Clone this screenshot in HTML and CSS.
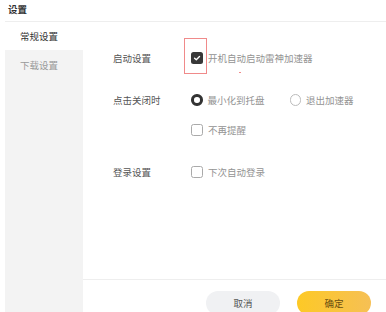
FILE: index.html
```html
<!DOCTYPE html>
<html>
<head>
<meta charset="utf-8">
<link rel="stylesheet" href="styles.css">
</head>
<body>
<div class="header"><span class="title">设置</span></div>
<div class="layout">
  <nav class="sidebar">
    <div class="nav-item active">常规设置</div>
    <div class="nav-item">下载设置</div>
  </nav>
  <div class="main">
    <div class="content">
      <div class="group g1">
        <div class="label">启动设置</div>
        <div class="controls">
          <div class="line">
            <span class="cb-wrap">
              <span class="checkbox checked">
                <svg viewBox="0 0 12 12" width="12" height="12"><path d="M3.6 6.2 L5.3 7.8 L8.5 4.6" fill="none" stroke="#fff" stroke-width="1.4" stroke-linecap="round" stroke-linejoin="round"/></svg>
              </span>
              <span class="highlight"></span>
              <span class="dot"></span>
            </span>
            <span class="opt">开机自动启动雷神加速器</span>
          </div>
        </div>
      </div>
      <div class="group g2">
        <div class="label">点击关闭时</div>
        <div class="controls">
          <div class="line">
            <span class="radio selected"></span>
            <span class="opt">最小化到托盘</span>
            <span class="radio second"></span>
            <span class="opt">退出加速器</span>
          </div>
          <div class="line sub">
            <span class="checkbox"></span>
            <span class="opt">不再提醒</span>
          </div>
        </div>
      </div>
      <div class="group g3">
        <div class="label">登录设置</div>
        <div class="controls">
          <div class="line">
            <span class="checkbox"></span>
            <span class="opt">下次自动登录</span>
          </div>
        </div>
      </div>
    </div>
    <div class="footer">
      <button class="btn cancel">取消</button>
      <button class="btn ok">确定</button>
    </div>
  </div>
</div>
</body>
</html>
```

FILE: styles.css
```css
* { box-sizing: border-box; }
html, body { margin: 0; padding: 0; }
body {
  width: 386px;
  height: 312px;
  overflow: hidden;
  background: #fff;
  font-family: "Noto Sans CJK SC", "Noto Sans", sans-serif;
  font-size: 9.5px;
  color: #555;
}
.header {
  margin-left: 5px;
  height: 22px;
  padding-left: 3px;
  border-bottom: 1px solid #eeeeee;
  display: flex;
  align-items: center;
  padding-bottom: 4px;
}
.title {
  font-weight: bold;
  color: #333;
  font-size: 9.5px;
}
.layout {
  display: flex;
  margin-left: 5px;
  height: 290px;
}
.sidebar {
  width: 78px;
  background: #f3f3f3;
  display: flex;
  flex-direction: column;
}
.nav-item {
  height: 29px;
  padding-left: 15px;
  display: flex;
  align-items: center;
  color: #999;
}
.nav-item.active {
  background: #fff;
  color: #333;
  height: 28px;
}
.main {
  flex: 1;
  display: flex;
  flex-direction: column;
}
.content {
  flex: 1;
  padding-left: 30px;
  padding-top: 26px;
}
.group {
  display: flex;
}
.g2 { margin-top: 22px; }
.g3 { margin-top: 22px; }
.label {
  width: 78px;
  height: 20px;
  display: flex;
  align-items: center;
  color: #555;
}
.controls {
  display: flex;
  flex-direction: column;
  gap: 10px;
}
.line {
  height: 20px;
  display: flex;
  align-items: center;
}
.opt {
  color: #939393;
  margin-left: 5px;
}
.cb-wrap {
  position: relative;
  width: 12px;
  height: 12px;
  display: inline-block;
}
.checkbox {
  width: 12px;
  height: 12px;
  border: 1px solid #aaa;
  border-radius: 2.5px;
  display: inline-block;
  background: #fff;
}
.checkbox.checked {
  border: none;
  background: #383838;
  display: block;
}
.checkbox.checked svg { display: block; }
.highlight {
  position: absolute;
  left: -7px;
  top: -14px;
  width: 23px;
  height: 36px;
  border: 1px solid #f08a8a;
}
.dot {
  position: absolute;
  left: 48px;
  top: 20px;
  width: 2px;
  height: 1px;
  background: #f08a8a;
}
.radio {
  width: 11.5px;
  height: 11.5px;
  border-radius: 50%;
  border: 1px solid #bbb;
  display: inline-block;
}
.radio.selected {
  border: 3.5px solid #333;
}
.radio.second { margin-left: 25px; }
.footer {
  height: 33px;
  border-top: 1px solid #eeeeee;
  display: flex;
  justify-content: flex-end;
  align-items: flex-start;
  padding-top: 11px;
  padding-right: 15px;
  gap: 17px;
}
.btn {
  width: 74px;
  height: 24px;
  border: none;
  border-radius: 12px;
  font-family: "Noto Sans CJK SC", "Noto Sans", sans-serif;
  font-size: 9.5px;
  padding: 0;
  flex-shrink: 0;
}
.cancel {
  background: #f0f1f3;
  color: #555;
}
.ok {
  background: linear-gradient(90deg, #fdc926, #f6c055);
  color: #6b4e10;
}
```
